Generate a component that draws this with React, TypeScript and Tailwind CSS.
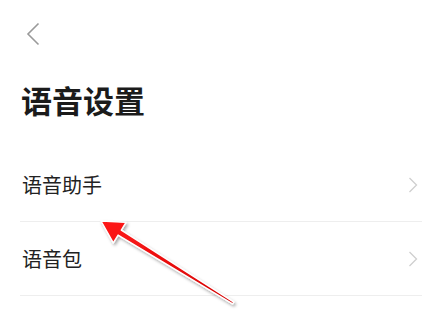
import React from 'react';

const items = ['语音助手', '语音包'];

const ChevronRight = () => (
  <svg width="10" height="16" viewBox="0 0 10 16" fill="none">
    <path d="M1.5 1 L8.5 8 L1.5 15" stroke="#cfcfcf" strokeWidth="1.3" />
  </svg>
);

export default function App() {
  return (
    <div className="relative w-[437px] h-[318px] bg-white overflow-hidden font-['Noto_Sans_CJK_SC',sans-serif]">
      <div className="pl-[26px] pt-[22px]">
        <svg width="14" height="24" viewBox="0 0 14 24" fill="none">
          <path d="M12.5 1.5 L2 12 L12.5 22.5" stroke="#9a9a9a" strokeWidth="1.6" />
        </svg>
      </div>
      <h1 className="mt-[38px] pl-[21px] text-[31px] leading-[32px] font-bold text-[#1b1b1b] tracking-[0px]">
        语音设置
      </h1>
      <ul className="mt-[32px] ml-[20px] mr-[15px]">
        {items.map((label) => (
          <li
            key={label}
            className="h-[74px] flex items-center justify-between border-b border-[#eeeeee] pl-[2px] pr-[4px]"
          >
            <span className="text-[20px] leading-[20px] text-[#222222]">{label}</span>
            <ChevronRight />
          </li>
        ))}
      </ul>

      {/* annotation arrow */}
      <svg className="absolute left-0 top-0" width="437" height="318" viewBox="0 0 437 318">
        <defs>
          <filter id="sh" x="-20%" y="-20%" width="140%" height="140%">
            <feDropShadow dx="1.5" dy="2" stdDeviation="1.5" floodColor="#000" floodOpacity="0.35" />
          </filter>
          <linearGradient id="rg" x1="0" y1="0" x2="1" y2="1">
            <stop offset="0" stopColor="#ff1a1a" />
            <stop offset="1" stopColor="#d40000" />
          </linearGradient>
        </defs>
        <polygon
          points="101,221 126,222.4 121.3,230.1 233.8,302.2 232.6,303.8 118.1,235.1 113.3,242.8"
          fill="url(#rg)"
          stroke="#ffffff"
          strokeWidth="1.4"
          strokeLinejoin="round"
          filter="url(#sh)"
        />
      </svg>
    </div>
  );
}
